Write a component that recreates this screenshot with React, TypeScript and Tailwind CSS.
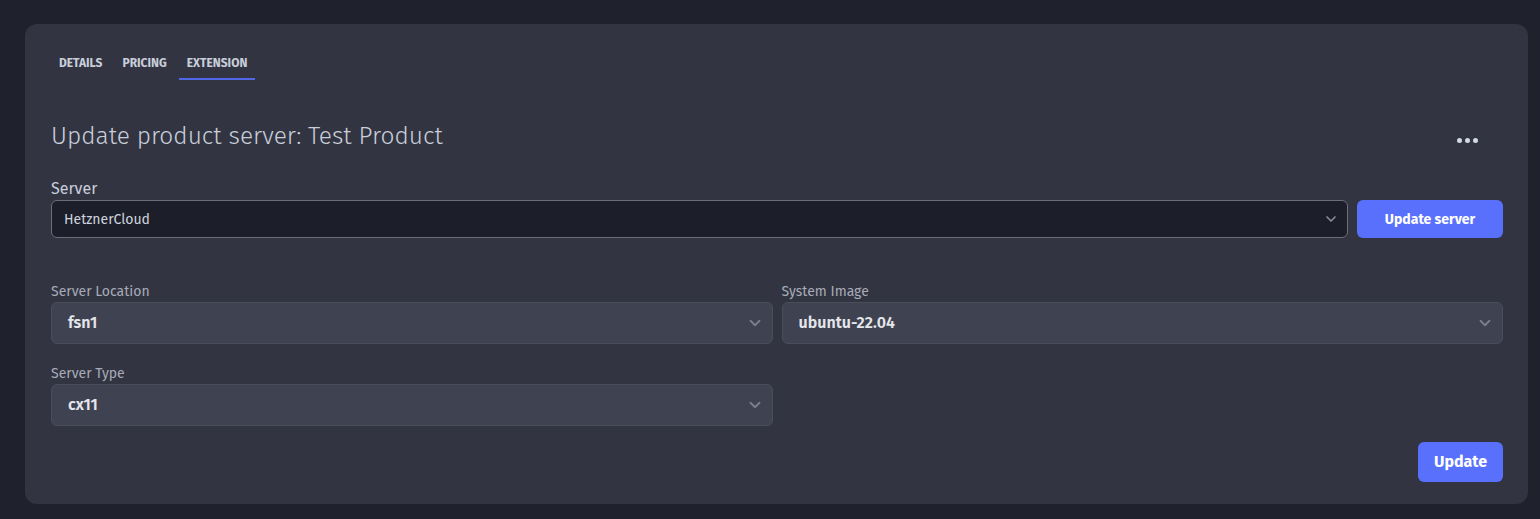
import { ChevronDown } from 'lucide-react'

const font = { fontFamily: '"Fira Sans", Lato, "Noto Sans", sans-serif' }

function Select({ value }: { value: string }) {
  return (
    <div className="h-[42px] rounded-md border border-[#4a4d5b] bg-[#3f4250] flex items-center justify-between pl-4 pr-2">
      <span className="text-[16px] font-semibold text-[#e4e6ec]">{value}</span>
      <ChevronDown size={18} strokeWidth={2.5} className="text-[#7b7e8a]" />
    </div>
  )
}

export default function App() {
  return (
    <div className="min-h-screen bg-[#1f212c] pt-6 pl-[25px] pr-3" style={font}>
      <div className="bg-[#323541] rounded-xl pl-[26px] pr-[25px] pt-[30px] pb-[22px]">
        {/* tabs */}
        <div className="flex items-end text-[12px] font-bold text-[#c9cedb]">
          <div className="px-2 pb-[8px]">DETAILS</div>
          <div className="px-2 pb-[8px] ml-[4px]">PRICING</div>
          <div className="px-2 pb-[6px] ml-[4px] border-b-2 border-[#5166e8]">EXTENSION</div>
        </div>

        <div className="flex items-center justify-between mt-[40px]">
          <h1 className="text-[24.5px] font-light text-[#c9cedb] leading-8">Update product server: Test Product</h1>
          <div className="flex gap-[3px] mr-[25px] mt-2">
            <span className="w-[5px] h-[5px] rounded-full bg-[#d4d8e2]" />
            <span className="w-[5px] h-[5px] rounded-full bg-[#d4d8e2]" />
            <span className="w-[5px] h-[5px] rounded-full bg-[#d4d8e2]" />
          </div>
        </div>

        <div className="mt-[27px] text-[16px] text-[#c9cedb] leading-5">Server</div>
        <div className="flex gap-[9px] mt-[1px]">
          <div className="flex-1 h-[38px] rounded-md border border-[#6c6f7b] bg-[#1c1f2a] flex items-center justify-between pl-3 pr-2">
            <span className="text-[14px] text-[#cfd3dd]">HetznerCloud</span>
            <ChevronDown size={16} strokeWidth={2.5} className="text-[#8a8d98]" />
          </div>
          <button className="w-[146px] h-[38px] rounded-md bg-[#5870fc] text-white text-[14px] font-bold">Update server</button>
        </div>

        <div className="grid grid-cols-2 gap-x-[9px] mt-[44px]">
          <div>
            <div className="text-[14px] text-[#a7abb7] leading-5">Server Location</div>
            <Select value="fsn1" />
          </div>
          <div>
            <div className="text-[14px] text-[#a7abb7] leading-5">System Image</div>
            <Select value="ubuntu-22.04" />
          </div>
          <div className="mt-[20px]">
            <div className="text-[14px] text-[#a7abb7] leading-5">Server Type</div>
            <Select value="cx11" />
          </div>
        </div>

        <div className="flex justify-end mt-[16px]">
          <button className="w-[85px] h-[40px] rounded-md bg-[#5870fc] text-white text-[16px] font-bold">Update</button>
        </div>
      </div>
    </div>
  )
}
